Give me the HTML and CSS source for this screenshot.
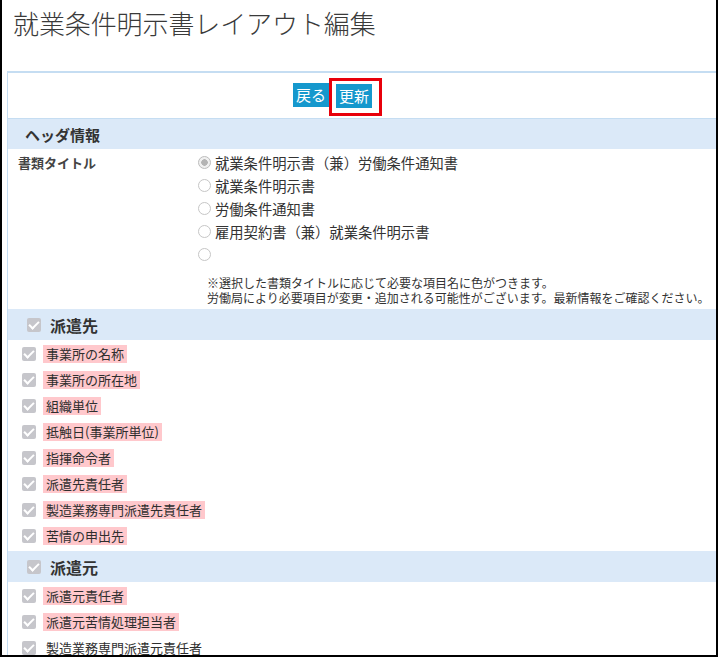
FILE: index.html
```html
<!DOCTYPE html>
<html lang="ja">
<head>
<meta charset="utf-8">
<title>就業条件明示書レイアウト編集</title>
<link rel="stylesheet" href="styles.css">
</head>
<body>
<div class="frame">
  <div class="title-area">
    <h1 class="title">就業条件明示書レイアウト編集</h1>
  </div>
  <div class="panel">
    <div class="btn-row">
      <button class="btn">戻る</button>
      <span class="btn-wrap"><button class="btn">更新</button><span class="mark"></span></span>
    </div>
    <div class="sec-head sec-head-plain">ヘッダ情報</div>
    <div class="form-row">
      <div class="form-label">書類タイトル</div>
      <div class="form-field">
        <div class="radio-row"><span class="radio checked"></span>就業条件明示書（兼）労働条件通知書</div>
        <div class="radio-row"><span class="radio"></span>就業条件明示書</div>
        <div class="radio-row"><span class="radio"></span>労働条件通知書</div>
        <div class="radio-row"><span class="radio"></span>雇用契約書（兼）就業条件明示書</div>
        <div class="radio-row"><span class="radio"></span></div>
        <div class="note">
          <div class="note-line">※選択した書類タイトルに応じて必要な項目名に色がつきます。</div>
          <div class="note-line">労働局により必要項目が変更・追加される可能性がございます。最新情報をご確認ください。</div>
        </div>
      </div>
    </div>
    <div class="sec-head"><span class="cb"></span><span class="sec-title">派遣先</span></div>
    <div class="items">
      <div class="item"><span class="cb"></span><span class="lbl req">事業所の名称</span></div>
      <div class="item"><span class="cb"></span><span class="lbl req">事業所の所在地</span></div>
      <div class="item"><span class="cb"></span><span class="lbl req">組織単位</span></div>
      <div class="item"><span class="cb"></span><span class="lbl req">抵触日(事業所単位)</span></div>
      <div class="item"><span class="cb"></span><span class="lbl req">指揮命令者</span></div>
      <div class="item"><span class="cb"></span><span class="lbl req">派遣先責任者</span></div>
      <div class="item"><span class="cb"></span><span class="lbl req">製造業務専門派遣先責任者</span></div>
      <div class="item"><span class="cb"></span><span class="lbl req">苦情の申出先</span></div>
    </div>
    <div class="sec-head"><span class="cb"></span><span class="sec-title">派遣元</span></div>
    <div class="items">
      <div class="item"><span class="cb"></span><span class="lbl req">派遣元責任者</span></div>
      <div class="item"><span class="cb"></span><span class="lbl req">派遣元苦情処理担当者</span></div>
      <div class="item"><span class="cb"></span><span class="lbl">製造業務専門派遣元責任者</span></div>
    </div>
  </div>
</div>
</body>
</html>
```
FILE: styles.css
```css
html, body {
  margin: 0;
  padding: 0;
  background: #fff;
}
body {
  font-family: "Noto Sans CJK JP", "Noto Sans", sans-serif;
  color: #333;
}
.frame {
  width: 718px;
  height: 657px;
  box-sizing: border-box;
  border-left: 2px solid #000;
  border-right: 2px solid #000;
  border-bottom: 2px solid #000;
  overflow: hidden;
}
.title-area {
  height: 71px;
  padding-left: 11px;
  box-sizing: border-box;
  padding-top: 6px;
}
.title {
  margin: 0;
  font-size: 26px;
  line-height: 34px;
  font-weight: 300;
  color: #3a3a3a;
  letter-spacing: -0.1px;
}
.panel {
  margin-left: 5px;
  border-left: 1px solid #c5ddf2;
  border-top: 2px solid #c5ddf2;
}
.btn-row {
  height: 46px;
  box-sizing: border-box;
  padding: 10px 0 0 285px;
  border-bottom: 1px solid #c5ddf2;
  display: flex;
  align-items: flex-start;
  gap: 7px;
}
.btn {
  width: 36px;
  height: 24px;
  padding: 0;
  border: 0;
  background: #1598cd;
  color: #fff;
  font-family: "Noto Sans CJK JP", sans-serif;
  font-size: 15px;
  line-height: 24px;
}
.btn-wrap {
  position: relative;
  display: block;
  height: 24px;
}
.mark {
  position: absolute;
  left: -7px;
  top: -5px;
  width: 53px;
  height: 38px;
  box-sizing: border-box;
  border: 3px solid #e8000b;
}
.sec-head {
  height: 31px;
  background: #dbe9f8;
  display: flex;
  align-items: center;
  padding-left: 19px;
  gap: 9px;
}
.sec-head-plain {
  height: 30px;
  padding-left: 17px;
  font-size: 15px;
  font-weight: bold;
}
.sec-title {
  font-size: 16px;
  font-weight: bold;
}
.form-row {
  display: flex;
  padding-top: 2px;
  padding-bottom: 4px;
}
.form-label {
  width: 180px;
  padding-left: 10px;
  font-size: 13px;
  font-weight: bold;
  line-height: 23px;
  color: #444;
}
.form-field {
  display: flex;
  flex-direction: column;
}
.radio-row {
  height: 23px;
  display: flex;
  align-items: center;
  gap: 4px;
  font-size: 14.3px;
  color: #333;
}
.radio {
  width: 13px;
  height: 13px;
  flex: none;
  box-sizing: border-box;
  border: 1px solid #c6c6c6;
  border-radius: 50%;
  background: #fff;
}
.radio.checked {
  background: radial-gradient(circle, #b4b4b4 0 3px, #f0f0f0 3.5px);
  border-color: #bcbcbc;
}
.note {
  margin-top: 9px;
  margin-left: 9px;
  font-size: 12px;
  color: #333;
}
.note-line {
  height: 15px;
  line-height: 15px;
  white-space: nowrap;
}
.items {
  padding: 1px 0 2px 14px;
}
.item {
  height: 26px;
  display: flex;
  align-items: center;
  gap: 7px;
}
.cb {
  width: 14px;
  height: 14px;
  flex: none;
  background: #c6c6cb;
  border-radius: 2px;
  position: relative;
}
.cb::after {
  content: "";
  position: absolute;
  left: 4px;
  top: 1px;
  width: 4px;
  height: 8px;
  border: solid #fff;
  border-width: 0 2px 2px 0;
  transform: rotate(45deg);
}
.lbl {
  font-size: 13px;
  line-height: 18px;
  padding: 0 3px;
  color: #2e2e2e;
}
.lbl.req {
  background: #ffc8cc;
}
```
